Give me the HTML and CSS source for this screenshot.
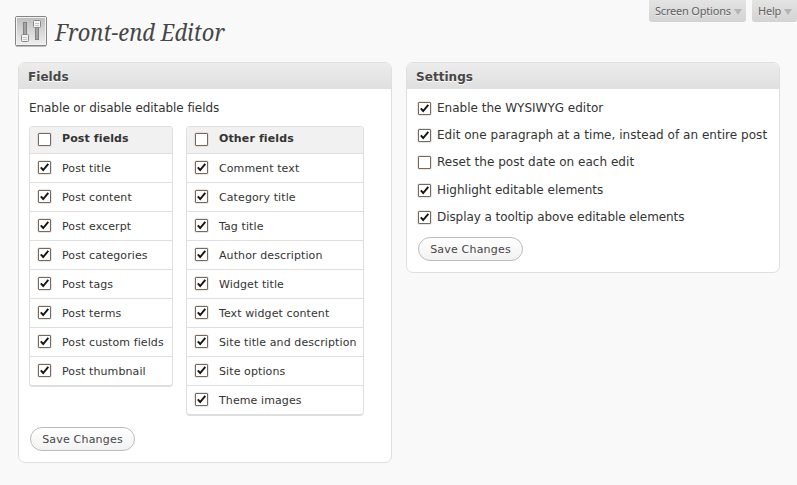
FILE: index.html
```
<!DOCTYPE html>
<html lang="en">
<head>
<meta charset="utf-8">
<title>Front-end Editor</title>
<link rel="stylesheet" href="styles.css">
</head>
<body>
<header class="top">
  <div class="title">
    <svg class="icon" width="34" height="33" viewBox="0 0 34 33">
      <defs>
        <linearGradient id="g" x1="0" y1="0" x2="0" y2="1"><stop offset="0" stop-color="#bcbcbc"/><stop offset="1" stop-color="#f0f0f0"/></linearGradient>
      </defs>
      <rect x="1.5" y="2" width="31" height="30" rx="1.5" fill="#bbb"/>
      <rect x="1.5" y="1.5" width="31" height="29" rx="1.5" fill="url(#g)" stroke="#858585"/>
      <rect x="2.5" y="2.5" width="29" height="27" fill="none" stroke="#f2f2f2"/>
      <rect x="9.500" y="7.500" width="3" height="15" fill="#a4a4a4" stroke="#808080"/>
      <rect x="21.500" y="9.500" width="3" height="15" fill="#a4a4a4" stroke="#808080"/>
      <rect x="7.500" y="19.500" width="7" height="7" rx="1" fill="#f4f4f4" stroke="#888"/>
      <rect x="19.500" y="5.500" width="7" height="7" rx="1" fill="#f4f4f4" stroke="#888"/>
      <path d="M9 22.500h4M9 24.500h4M21 8.500h4M21 10.500h4" stroke="#c4c4c4"/>
    </svg>
    <h1>Front-end Editor</h1>
  </div>
  <nav class="tabs">
    <a class="tab options">Screen Options<i class="arrow"></i></a>
    <a class="tab help">Help<i class="arrow"></i></a>
  </nav>
</header>
<svg class="defs" width="0" height="0"><symbol id="tick" viewBox="0 0 13 13"><path d="M2.800 6.300L5.200 9L10.300 2.800" fill="none" stroke="#151515" stroke-width="1.900"/></symbol></svg>
<main class="panels">
  <section class="panel">
    <h2>Fields</h2>
    <div class="body">
      <p class="intro">Enable or disable editable fields</p>
      <div class="tables">
        <ul class="table posts">
          <li class="head"><span class="box"></span><b>Post fields</b></li>
          <li><span class="box"><svg><use href="#tick"/></svg></span><span>Post title</span></li>
          <li><span class="box"><svg><use href="#tick"/></svg></span><span>Post content</span></li>
          <li><span class="box"><svg><use href="#tick"/></svg></span><span>Post excerpt</span></li>
          <li><span class="box"><svg><use href="#tick"/></svg></span><span>Post categories</span></li>
          <li><span class="box"><svg><use href="#tick"/></svg></span><span>Post tags</span></li>
          <li><span class="box"><svg><use href="#tick"/></svg></span><span>Post terms</span></li>
          <li><span class="box"><svg><use href="#tick"/></svg></span><span>Post custom fields</span></li>
          <li><span class="box"><svg><use href="#tick"/></svg></span><span>Post thumbnail</span></li>
        </ul>
        <ul class="table others">
          <li class="head"><span class="box"></span><b>Other fields</b></li>
          <li><span class="box"><svg><use href="#tick"/></svg></span><span>Comment text</span></li>
          <li><span class="box"><svg><use href="#tick"/></svg></span><span>Category title</span></li>
          <li><span class="box"><svg><use href="#tick"/></svg></span><span>Tag title</span></li>
          <li><span class="box"><svg><use href="#tick"/></svg></span><span>Author description</span></li>
          <li><span class="box"><svg><use href="#tick"/></svg></span><span>Widget title</span></li>
          <li><span class="box"><svg><use href="#tick"/></svg></span><span>Text widget content</span></li>
          <li><span class="box"><svg><use href="#tick"/></svg></span><span>Site title and description</span></li>
          <li><span class="box"><svg><use href="#tick"/></svg></span><span>Site options</span></li>
          <li><span class="box"><svg><use href="#tick"/></svg></span><span>Theme images</span></li>
        </ul>
      </div>
      <button class="save">Save Changes</button>
    </div>
  </section>
  <section class="panel">
    <h2>Settings</h2>
    <div class="body">
      <ul class="settings">
        <li><span class="box"><svg><use href="#tick"/></svg></span>Enable the WYSIWYG editor</li>
        <li class="loose"><span class="box"><svg><use href="#tick"/></svg></span>Edit one paragraph at a time, instead of an entire post</li>
        <li class="loose"><span class="box"></span>Reset the post date on each edit</li>
        <li><span class="box"><svg><use href="#tick"/></svg></span>Highlight editable elements</li>
        <li class="tight"><span class="box"><svg><use href="#tick"/></svg></span>Display a tooltip above editable elements</li>
      </ul>
      <button class="save">Save Changes</button>
    </div>
  </section>
</main>
</body>
</html>
```
FILE: styles.css
```
* { box-sizing: border-box; }
body { margin: 0; height: 485px; overflow: hidden; background: #f9f9f9; color: #333; font: 12px/18px "DejaVu Sans", sans-serif; }
h1, h2, p, ul { margin: 0; padding: 0; }
ul { list-style: none; }
.defs { display: block; }
.top { display: flex; justify-content: space-between; height: 62px; }
.title { display: flex; padding: 15px 0 0 14px; }
.icon { display: block; }
h1 { margin-left: 6.5px; font: italic 24px/34px "Droid Serif", "Noto Serif", "Liberation Serif", serif; color: #464646; white-space: nowrap; text-shadow: 0 1px 0 #fff; transform: scaleX(.914); transform-origin: left; }
.tabs { display: flex; gap: 6px; }
.tab { display: flex; align-items: center; gap: 3px; height: 22px; padding: 0 6px; background: linear-gradient(#e4e4e4, #d3d3d3); border-radius: 0 0 3px 3px; color: #606060; font: 11px/22px "Noto Sans", sans-serif; letter-spacing: -.2px; white-space: nowrap; text-shadow: 0 1px 0 #eee; }
.options { width: 97px; }
.help { width: 45px; }
.arrow { border: solid transparent; border-width: 6px 4px 0; border-top-color: #b5b5b5; margin-top: 2px; }
.panels { display: flex; align-items: flex-start; gap: 14px; padding-left: 18px; }
.panel { width: 374px; border: 1px solid #dfdfdf; border-radius: 7px; background: #fff; overflow: hidden; }
h2 { height: 26px; padding-left: 9px; font: bold 12px/28px "DejaVu Sans", sans-serif; letter-spacing: .05px; color: #464646; background: linear-gradient(#ececec, #dfdfdf); text-shadow: 0 1px 0 #fff; }
.body { padding: 0 10px 11px; }
.intro { padding: 10px 0 9px; line-height: 18px; letter-spacing: -.06px; }
.tables { display: flex; align-items: flex-start; gap: 13px; margin-bottom: 11px; }
.table { border: 1px solid #dfdfdf; border-bottom-width: 2px; border-radius: 4px; overflow: hidden; font-size: 11px; letter-spacing: .1px; }
.posts { width: 144px; }
.others { width: 178px; }
.table li { display: flex; align-items: center; height: 29px; padding-left: 8px; border-bottom: 1px solid #dfdfdf; white-space: nowrap; }
.table li:last-child { height: 28px; border-bottom: 0; }
.table span + span { line-height: 20px; padding-top: 1px; }
.table .head { height: 27px; background: #f1f1f1; line-height: 14px; }
.head b { margin-top: -2px; letter-spacing: .12px; }
.box { flex: none; width: 13px; height: 13px; border: 1px solid #766a5f; border-radius: 1px; background: #fff; box-shadow: 0 0 0 .5px #d6cec7; }
.box svg { display: block; width: 13px; height: 13px; margin: -1px; }
.table .box { margin: 0 11px 1px 0; }
.settings { padding: 5px 0 6px 1px; }
.settings li { display: flex; align-items: center; height: 27.4px; white-space: nowrap; }
.settings .loose { letter-spacing: .035px; }
.settings .tight { letter-spacing: -.07px; }
.settings .box { margin: 1px 6px 0 0; }
.save { display: block; width: 105px; height: 24px; margin-left: 1px; padding: 2px 0 0; border: 1px solid #bbb; border-radius: 12px; background: linear-gradient(#fff, #f2f2f2); color: #464646; font: 11px/20px "DejaVu Sans", sans-serif; letter-spacing: .2px; }
```
